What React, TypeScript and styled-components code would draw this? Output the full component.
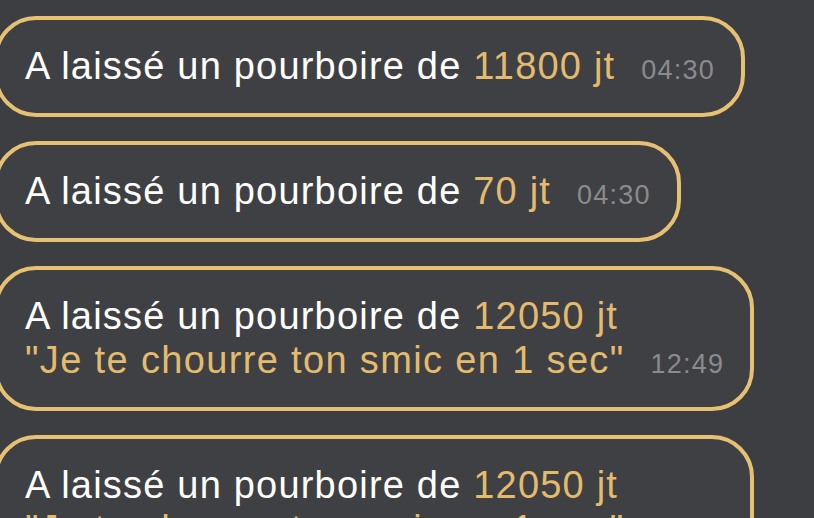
import { createGlobalStyle, styled } from 'styled-components';

const GlobalStyle = createGlobalStyle`
  html, body {
    margin: 0;
    padding: 0;
    background: #3d3e41;
    overflow: hidden;
  }
  body {
    font-family: "Liberation Sans", Arial, sans-serif;
  }
`;

type Tip = {
  amount: string;
  time: string;
  note?: string;
};

const tips: Tip[] = [
  { amount: '11800 jt', time: '04:30' },
  { amount: '70 jt', time: '04:30' },
  { amount: '12050 jt', time: '12:49', note: '"Je te chourre ton smic en 1 sec"' },
  { amount: '12050 jt', time: '12:49', note: '"Je te chourre ton smic en 1 sec"' },
];

const App = () => {
  return (
    <>
      <GlobalStyle />
      <StyledList>
        {tips.map((tip, i) => (
          <StyledBubble key={i}>
            <StyledLine>
              A laissé un pourboire de <StyledGold>{tip.amount}</StyledGold>
              {!tip.note && <StyledTime>{tip.time}</StyledTime>}
            </StyledLine>
            {tip.note && (
              <StyledLine>
                <StyledNote>{tip.note}</StyledNote>
                <StyledTime>{tip.time}</StyledTime>
              </StyledLine>
            )}
          </StyledBubble>
        ))}
      </StyledList>
    </>
  );
};

export default App;

const StyledList = styled.div`
  display: flex;
  flex-direction: column;
  align-items: flex-start;
  gap: 24px;

  height: 518px;
  padding-top: 16px;
  margin-left: -6px;
  box-sizing: border-box;
`;
const StyledBubble = styled.div`
  display: flex;
  flex-direction: column;
  justify-content: center;
  flex-shrink: 0;

  padding: 24px 26px 25px 27px;

  border: 4px solid #e6c073;
  border-radius: 42px;
  background-color: #3f4043;
`;
const StyledLine = styled.div`
  display: flex;
  align-items: baseline;

  height: 44px;

  color: #ffffff;
  font-size: 38px;
  line-height: 44px;
  letter-spacing: 1.2px;
  white-space: pre;
`;
const StyledGold = styled.span`
  color: #e4bb6c;
`;
const StyledNote = styled(StyledGold)`
  letter-spacing: 1.35px;
`;
const StyledTime = styled.span`
  margin-left: 26px;

  color: #8b8b8d;
  font-size: 27px;
  letter-spacing: 1.2px;
`;
